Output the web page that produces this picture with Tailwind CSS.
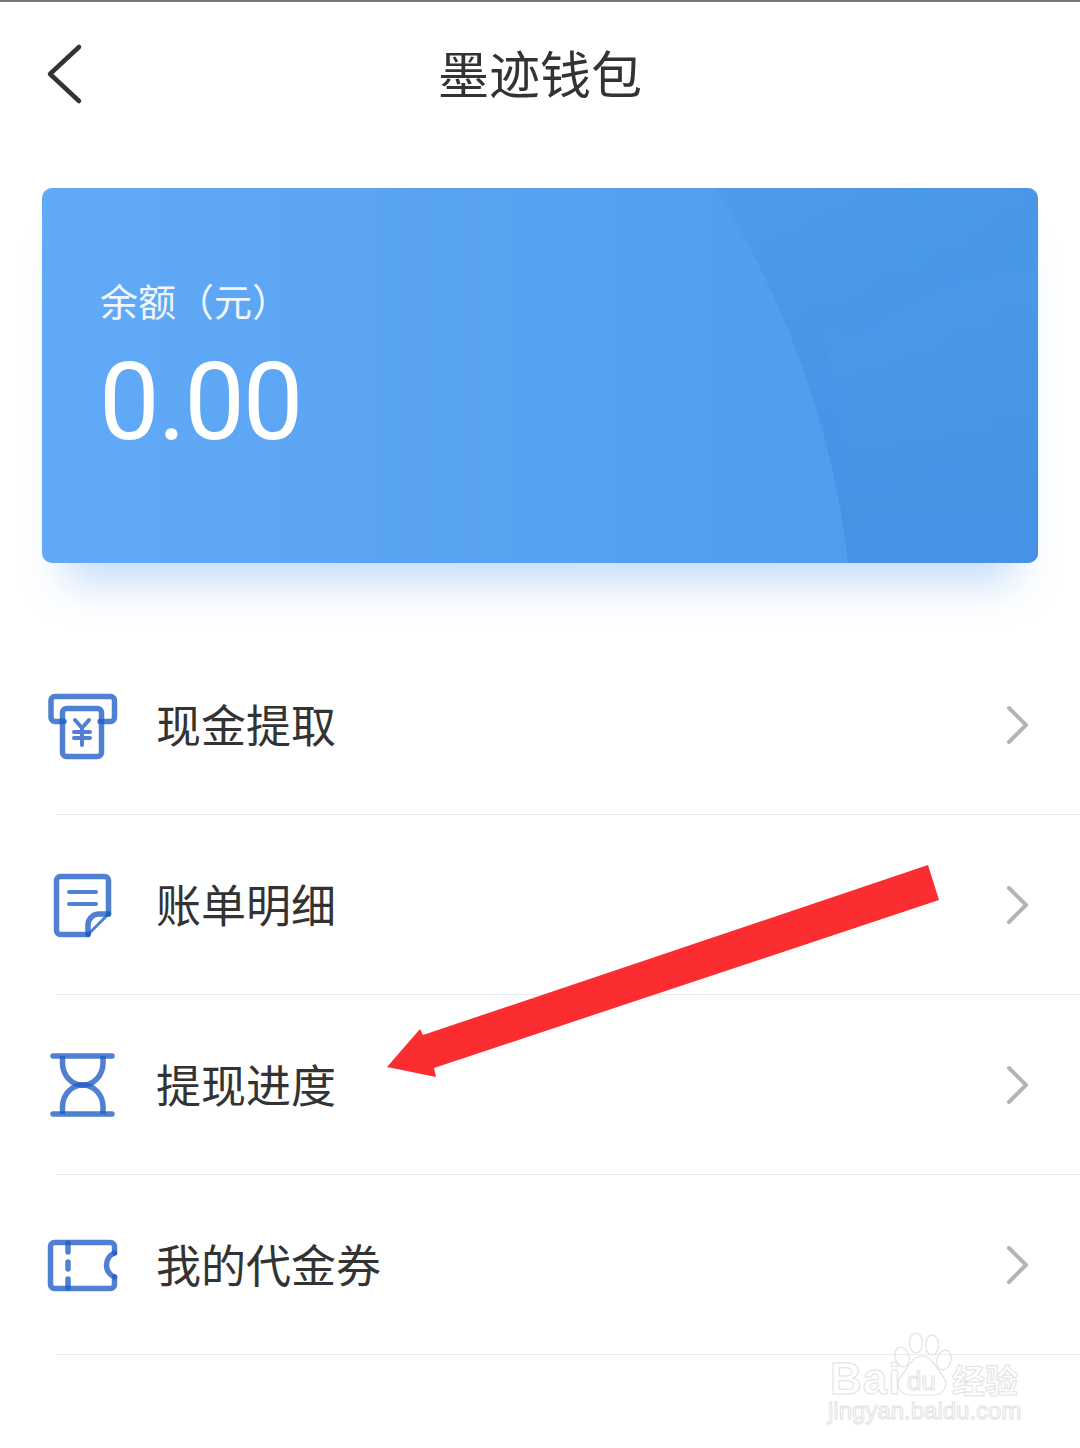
<!DOCTYPE html>
<html lang="zh-CN">
<head>
  <meta charset="UTF-8" />
  <title>墨迹钱包</title>
  <script src="https://cdn.jsdelivr.net/npm/@tailwindcss/browser@4"></script>
</head>
<body class="bg-white font-['Noto_Sans_CJK_SC','Noto_Sans',sans-serif] text-[#333]">
  <div class="relative w-[1080px] h-[1448px] overflow-hidden bg-white">
    <div class="h-[2px] bg-[#777]"></div>

    <!-- Header -->
    <header class="relative h-[146px] flex items-center justify-center pb-[5px]">
      <svg class="absolute left-[40px] top-[36px]" width="48" height="72" viewBox="0 0 48 72" fill="none" stroke="#333" stroke-width="4.5" stroke-linecap="round" stroke-linejoin="round">
        <path d="M39 9L10 36L39 63" />
      </svg>
      <h1 class="text-[51px] leading-none font-normal">墨迹钱包</h1>
    </header>

    <!-- Balance card -->
    <section class="relative mt-[40px] mx-[42px] h-[375px] rounded-[10px] bg-linear-to-r from-[#61aaf7] to-[#4c99eb] shadow-[0_42px_40px_-24px_rgba(74,150,240,0.34)] overflow-hidden text-white">
      <svg class="absolute inset-0" width="996" height="375" viewBox="0 0 996 375">
        <defs>
          <linearGradient id="cardFade" x1="0" y1="0" x2="0" y2="1">
            <stop offset="0" stop-color="#4593e6" stop-opacity="0.35" />
            <stop offset="1" stop-color="#4391e6" stop-opacity="1" />
          </linearGradient>
        </defs>
        <path d="M674 0C740 110 790 230 806 375H996V0Z" fill="url(#cardFade)" />
        <path d="M815 150C880 105 940 85 996 80V375H806C803 290 800 210 780 140Z" fill="#ffffff" fill-opacity="0.015" />
      </svg>
      <div class="relative pt-[86px] pl-[58px]">
        <p class="text-[38px] leading-[52px] text-white/90">余额（元）</p>
        <p class="mt-[20px] -ml-[1px] font-['Roboto'] text-[108px] leading-[112px] tracking-[-2px]">0.00</p>
      </div>
    </section>

    <!-- Menu -->
    <nav class="mt-[72px] text-[45px]">
      <div class="h-[179px] flex items-center">
        <svg class="ml-[43px] shrink-0" width="80" height="80" viewBox="0 0 80 80" fill="none" stroke="#1f5cc4" stroke-opacity="0.78" stroke-width="5.5" stroke-linecap="round" stroke-linejoin="round">
          <path d="M21 36.5H12A4 4 0 0 1 8 32.5V15.5A4 4 0 0 1 12 11.5H67.5A4 4 0 0 1 71.5 15.5V32.5A4 4 0 0 1 67.5 36.5H57" />
          <rect x="19.5" y="23.5" width="39" height="48" rx="4" />
          <path stroke-width="4" d="M32 35L39 43L46 35M31 47H47M31 53H47M39 43V60" />
        </svg>
        <span class="ml-[33px] mb-[3px] leading-none">现金提取</span>
        <svg class="ml-auto mr-[50px]" width="26" height="44" viewBox="0 0 26 44" fill="none" stroke="#b4b4b4" stroke-width="4" stroke-linecap="round" stroke-linejoin="round"><path d="M5 5L22 22L5 39" /></svg>
      </div>
      <div class="h-px ml-[56px] bg-[#ececec]"></div>

      <div class="h-[179px] flex items-center">
        <svg class="ml-[43px] shrink-0" width="80" height="80" viewBox="0 0 80 80" fill="none" stroke="#1f5cc4" stroke-opacity="0.78" stroke-width="5.5" stroke-linecap="round" stroke-linejoin="round">
          <path d="M45 69.5H17.5A4 4 0 0 1 13.5 65.5V15.5A4 4 0 0 1 17.5 11.5H61.5A4 4 0 0 1 65.5 15.5V49" />
          <path d="M45 69.5V60A11 11 0 0 1 56 49H65.5" />
          <path d="M45 69.5L65.5 49" stroke-width="3" />
          <path stroke-width="4" d="M26 27H53M26 39H53" />
        </svg>
        <span class="ml-[33px] mb-[3px] leading-none">账单明细</span>
        <svg class="ml-auto mr-[50px]" width="26" height="44" viewBox="0 0 26 44" fill="none" stroke="#b4b4b4" stroke-width="4" stroke-linecap="round" stroke-linejoin="round"><path d="M5 5L22 22L5 39" /></svg>
      </div>
      <div class="h-px ml-[56px] bg-[#ececec]"></div>

      <div class="h-[179px] flex items-center">
        <svg class="ml-[43px] shrink-0" width="80" height="80" viewBox="0 0 80 80" fill="none" stroke="#1f5cc4" stroke-opacity="0.78" stroke-width="5.5" stroke-linejoin="round">
          <path stroke-linecap="round" d="M10 11H69M10 69H69" />
          <path d="M19.5 11V18A20.25 22 0 0 0 60 18V11" />
          <path d="M19.5 69V62A20.25 22 0 0 1 60 62V69" />
        </svg>
        <span class="ml-[33px] mb-[3px] leading-none">提现进度</span>
        <svg class="ml-auto mr-[50px]" width="26" height="44" viewBox="0 0 26 44" fill="none" stroke="#b4b4b4" stroke-width="4" stroke-linecap="round" stroke-linejoin="round"><path d="M5 5L22 22L5 39" /></svg>
      </div>
      <div class="h-px ml-[56px] bg-[#ececec]"></div>

      <div class="h-[179px] flex items-center">
        <svg class="ml-[43px] shrink-0" width="80" height="80" viewBox="0 0 80 80" fill="none" stroke="#1f5cc4" stroke-opacity="0.78" stroke-width="5.5" stroke-linecap="round" stroke-linejoin="round">
          <path d="M71.5 28V21.5A4 4 0 0 0 67.5 17.5H11.5A4 4 0 0 0 7.5 21.5V59.5A4 4 0 0 0 11.5 63.5H67.5A4 4 0 0 0 71.5 59.5V52" />
          <path d="M71.5 28A13 13 0 0 0 71.5 52" />
          <path d="M25 18V27M25 37V44M25 54V63" />
        </svg>
        <span class="ml-[33px] mb-[3px] leading-none">我的代金券</span>
        <svg class="ml-auto mr-[50px]" width="26" height="44" viewBox="0 0 26 44" fill="none" stroke="#b4b4b4" stroke-width="4" stroke-linecap="round" stroke-linejoin="round"><path d="M5 5L22 22L5 39" /></svg>
      </div>
      <div class="h-px ml-[56px] bg-[#ececec]"></div>
    </nav>

    <!-- Red annotation arrow -->
    <svg class="absolute left-[380px] top-[860px]" width="565" height="225" viewBox="380 860 565 225">
      <path d="M928 865L939 900L434 1068L436 1077L387 1067L420 1029L423 1035Z" fill="#fb2d30" />
    </svg>

    <!-- Watermark -->
    <div class="absolute left-[828px] top-[1332px] w-[196px] h-[92px] text-transparent [-webkit-text-stroke:1px_#e2e2e2]">
      <svg class="absolute left-[62px] top-0" width="68" height="66" viewBox="0 0 68 66" fill="none" stroke="#e2e2e2" stroke-width="1.2">
        <ellipse cx="12" cy="25" rx="7" ry="10" transform="rotate(-15 12 25)" />
        <ellipse cx="26" cy="11" rx="6.5" ry="10" />
        <ellipse cx="42" cy="13" rx="6.5" ry="10" />
        <ellipse cx="54" cy="28" rx="7" ry="10" transform="rotate(15 54 28)" />
        <path d="M32 24C42 24 46 36 52 43C60 52 54 63 44 63H20C10 63 4 52 12 43C18 36 22 24 32 24Z" />
      </svg>
      <span class="absolute left-[2px] top-[30px] font-['Liberation_Sans'] text-[44px] leading-[34px] font-bold tracking-[1px]">Bai</span>
      <span class="absolute left-[79px] top-[37px] font-['Liberation_Sans'] text-[26px] leading-[24px]">du</span>
      <span class="absolute left-[124px] top-[30px] text-[33px] leading-[34px] font-bold">经验</span>
      <span class="absolute left-0 top-[67px] font-['Liberation_Sans'] text-[24px] leading-[24px]">jingyan.baidu.com</span>
    </div>
  </div>
</body>
</html>
